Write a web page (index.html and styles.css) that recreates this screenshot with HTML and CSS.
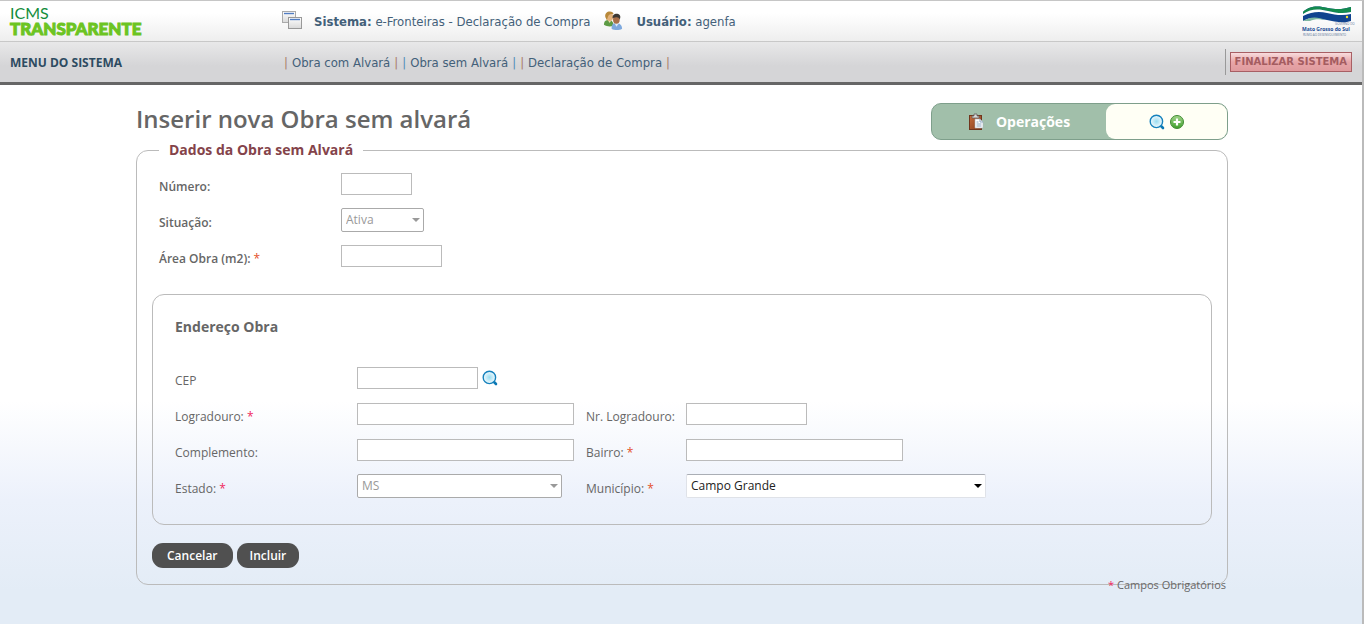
FILE: index.html
```
<!DOCTYPE html>
<html lang="pt-BR">
<head>
<meta charset="utf-8">
<meta name="viewport" content="width=device-width, initial-scale=1">
<title>ICMS Transparente</title>
<link rel="stylesheet" href="styles.css">
</head>
<body>
<svg class="defs" width="0" height="0" aria-hidden="true">
  <defs>
    <radialGradient id="lens"><stop offset="0" stop-color="#9adcf0"/><stop offset="1" stop-color="#f4fbfe"/></radialGradient>
    <linearGradient id="green" x2="0" y2="1"><stop offset="0" stop-color="#a4d68c"/><stop offset="1" stop-color="#3f9f2c"/></linearGradient>
    <linearGradient id="leather" x2="1" y2="1"><stop offset="0" stop-color="#c56c3c"/><stop offset="1" stop-color="#843c1b"/></linearGradient>
    <linearGradient id="pane" x2="0" y2="1"><stop offset="0" stop-color="#fff"/><stop offset="1" stop-color="#d9d9d9"/></linearGradient>
    <symbol id="search" viewBox="0 0 16 16">
      <path d="M11.500 11.500l2.500 2.500" stroke="#0b78b4" stroke-width="2.600" stroke-linecap="round"/>
      <circle cx="7.400" cy="7.400" r="6.200" fill="url(#lens)" stroke="#1682bd" stroke-width="1.400"/>
    </symbol>
  </defs>
</svg>
<div class="page">
  <header class="top">
    <div class="brand">
      <svg class="brand-logo" width="136" height="32" role="img" aria-label="ICMS Transparente">
        <text class="logo-thin" x="0" y="14">ICMS</text>
        <text class="logo-heavy" x="0" y="30">TRANSPARENTE</text>
      </svg>
    </div>
    <div class="info">
      <svg width="20" height="20" viewBox="0 0 20 20" aria-hidden="true">
        <rect x=".5" y=".5" width="13" height="11" fill="url(#pane)" stroke="#aaa"/>
        <path d="M2 2.500h10" stroke="#517dc3" stroke-width="1.400"/>
        <rect x="6.500" y="6.500" width="13" height="11" fill="url(#pane)" stroke="#999"/>
        <path d="M8 8.500h10" stroke="#517dc3" stroke-width="1.400"/>
      </svg>
      <p class="info-text"><strong>Sistema:</strong> e-Fronteiras - Declaração de Compra</p>
      <svg class="users" width="21" height="20" viewBox="0 0 22 20" aria-hidden="true">
        <path d="M1 14c0-4 2-5 5-5s5 2 5 6c-3 1-7 1-10-1z" fill="#5d9b44"/>
        <path d="M5 9l2 3 2-3z" fill="#e7d9b4"/>
        <ellipse cx="7" cy="5.500" rx="3.600" ry="4.500" fill="#e3b27b"/>
        <path d="M2.500 6c-1-4 2-6 4.500-6s4 1 4 3c-3-1-5 0-6 3l-1 3z" fill="#b8893a"/>
        <path d="M9 18c0-5 2-6 5-6s6 2 6 6c-3 2-8 2-11 0z" fill="#7ea9de"/>
        <path d="M12 12l2 4 3-4z" fill="#dce9f8"/>
        <ellipse cx="14" cy="8.500" rx="3.500" ry="4.500" fill="#a96f48"/>
        <path d="M10 7c0-4 3-5 5-4.500 3 .5 4 3 2.500 6-1-3-3-3-7.500-1.500z" fill="#3c3833"/>
      </svg>
      <p class="info-text"><strong>Usuário:</strong> agenfa</p>
    </div>
    <svg class="state-logo" width="50" height="32" viewBox="0 0 50 32" role="img" aria-label="Mato Grosso do Sul">
      <path d="M1 7C8 0 17 1 26 3s16 1 23-1v14c-9 3-17 0-24-1S9 11 1 16z" fill="#11438f"/>
      <path d="M1 7C8 0 17 1 26 3s16 1 23-1v5c-8 2-15 1-23-1S9 4 1 9z" fill="#138a4e"/>
      <path d="M1 9c8-6 17-5 25-3s15 3 23 1v2c-8 2-16 1-24-1S9 7 1 11z" fill="#fff"/>
      <path d="M1 16c8-5 15-4 23-1-6-1-12-1-16 1z" fill="#7fb7a2"/>
      <circle cx="45" cy="12" r="1.200" fill="#f5e02c"/>
      <text class="state-gov" x="33" y="20">GOVERNO DO</text>
      <text class="state-name" x="0" y="26">Mato Grosso do Sul</text>
      <text class="state-gov" x="1" y="31">RUMO AO DESENVOLVIMENTO</text>
    </svg>
  </header>

  <div class="menubar">
    <h2 class="menu-title">MENU DO SISTEMA</h2>
    <nav class="menu">
      <span>|</span><a href="#">Obra com Alvará</a><span>|</span>
      <span class="blue">|</span><a href="#">Obra sem Alvará</a><span class="blue">|</span>
      <span>|</span><a href="#">Declaração de Compra</a><span>|</span>
    </nav>
    <div class="finish"><button type="button" class="finish-button">FINALIZAR SISTEMA</button></div>
  </div>

  <main class="content">
    <div class="heading">
      <h1 class="title">Inserir nova Obra sem alvará</h1>
      <div class="ops">
        <div class="ops-label">
          <svg width="16" height="18" viewBox="0 0 16 18" aria-hidden="true">
            <rect x="1.500" y="2.500" width="12" height="14" fill="url(#leather)" stroke="#70351d"/>
            <path d="M4 3h2V1h3v2h2v2H4z" fill="#d9d9d9" stroke="#65615e" stroke-width=".8"/>
            <path d="M7 6h5l3 3v6H7z" fill="#fff" stroke="#a6b0ba" stroke-width=".6"/>
            <path d="M12 6v3h3M8.500 9h2M8.500 11h5M8.500 13h5" fill="none" stroke="#8ba5bf"/>
          </svg>
          <span>Operações</span>
        </div>
        <div class="ops-tools">
          <button type="button" class="icon-button" aria-label="Pesquisar"><svg width="16" height="16"><use href="#search"/></svg></button>
          <button type="button" class="icon-button" aria-label="Adicionar">
            <svg width="14" height="14" viewBox="0 0 14 14">
              <circle cx="7" cy="7" r="6.500" fill="url(#green)" stroke="#3f8a33"/>
              <path d="M7 3.500v7M3.500 7h7" stroke="#fff" stroke-width="2.200"/>
            </svg>
          </button>
        </div>
      </div>
    </div>

    <form>
      <fieldset class="panel">
        <legend class="legend">Dados da Obra sem Alvará</legend>
        <div class="fields fields-main">
          <label for="numero">Número:</label><div><input class="box w-xs" id="numero" type="text"></div>
          <label for="situacao">Situação:</label><div><span class="pick w-sm off"><select id="situacao" disabled><option>Ativa</option></select></span></div>
          <label for="area">Área Obra (m2): <span class="req">*</span></label><div><input class="box w-md" id="area" type="text"></div>
        </div>

        <section class="address">
          <h3 class="address-title">Endereço Obra</h3>
          <div class="fields fields-address">
            <label for="cep">CEP</label>
            <div class="wide cep"><input class="box w-lg" id="cep" type="text"><button type="button" class="icon-button" aria-label="Buscar CEP"><svg width="16" height="16"><use href="#search"/></svg></button></div>
            <label for="logradouro">Logradouro: <span class="req pink">*</span></label><div><input class="box w-xl" id="logradouro" type="text"></div>
            <label for="nr">Nr. Logradouro:</label><div><input class="box w-lg" id="nr" type="text"></div>
            <label for="complemento">Complemento:</label><div><input class="box w-xl" id="complemento" type="text"></div>
            <label for="bairro">Bairro: <span class="req">*</span></label><div><input class="box w-xl" id="bairro" type="text"></div>
            <label for="estado">Estado: <span class="req pink">*</span></label><div><span class="pick w-state off"><select id="estado" disabled><option>MS</option></select></span></div>
            <label for="municipio">Município: <span class="req">*</span></label><div><span class="pick w-city"><select id="municipio"><option>Campo Grande</option></select></span></div>
          </div>
        </section>

        <div class="actions">
          <button type="button" class="pill pill-wide">Cancelar</button>
          <button type="submit" class="pill">Incluir</button>
        </div>
      </fieldset>
      <p class="note"><span class="req pink">*</span> Campos Obrigatórios</p>
    </form>
  </main>
</div>
</body>
</html>
```
FILE: styles.css
```
* { box-sizing: border-box; }

body {
  margin: 0;
  color: #666;
  background: #fff;
  font: 12px/16px "Trebuchet MS", "Open Sans", sans-serif;
}

h1, h2, h3, p { margin: 0; }
svg { display: block; flex: none; }
.defs { position: absolute; }

.page {
  min-height: 100vh;
  margin-right: 2px;
  border-top: 1px solid #c6c6c6;
  border-right: 2px solid #bbb;
  background: linear-gradient(#fff 400px, #ecf1fb 500px, #e3ecf6 590px);
}

/* Header */
.top {
  display: flex;
  align-items: center;
  height: 41px;
  padding: 0 10px;
  border-bottom: 1px solid #c8c8c8;
  background: linear-gradient(#fff 30%, #eee);
}
.brand { width: 272px; }
.brand-logo { overflow: visible; }
.logo-thin { font: 400 16px "Lato", sans-serif; fill: #138d3c; }
.logo-heavy { font: 900 17px "Lato", sans-serif; fill: #6cc422; stroke: #6cc422; stroke-width: 1px; }
.info {
  display: flex;
  align-items: center;
  flex: 1;
  color: #436079;
  font: 13px/16px "DejaVu Sans Condensed", "DejaVu Sans", sans-serif;
}
.info-text { margin-left: 12px; padding-top: 2px; }
.users { margin-left: 13px; }
.state-logo { overflow: visible; }
.state-name { font: 700 5px "Open Sans", sans-serif; fill: #174a95; }
.state-gov { font: 3px "Open Sans", sans-serif; fill: #5d7599; }

.menubar {
  display: flex;
  align-items: center;
  height: 43px;
  padding: 0 10px;
  border-bottom: 3px solid #666;
  background: linear-gradient(#e8e8e9, #d5d5d7 60%);
}
.menu-title { width: 274px; padding-top: 2px; color: #2d4b61; font: 700 12px/16px "Open Sans", sans-serif; }
.menu {
  display: flex;
  flex: 1;
  gap: 4px;
  padding-top: 2px;
  font: 13px/16px "DejaVu Sans Condensed", "DejaVu Sans", sans-serif;
}
.menu span { color: #a97c68; }
.menu .blue { color: #4f8db9; }
.menu a { color: #436079; text-decoration: none; }
.finish { padding: 3px 0 3px 4px; border-left: 1px solid #999; }
.finish-button {
  height: 20px;
  padding: 0 4px;
  border: 1px solid #a85f64;
  background: linear-gradient(#f8dcdd, #e7a5a8 50%, #e09b9e);
  color: #a45c60;
  font: 700 10px/16px "DejaVu Sans", sans-serif;
}

/* Content */
.content { margin: 0 134px 0 136px; padding-top: 18px; }
.heading { display: flex; align-items: center; justify-content: space-between; height: 37px; }
.title { padding-bottom: 6px; font-size: 24px; line-height: 32px; font-weight: 600; }
.ops {
  display: flex;
  width: 297px;
  height: 37px;
  border: 1px solid #7e9f8b;
  border-radius: 10px;
  background: #a1bfaa;
}
.ops-label {
  display: flex;
  flex: 1;
  align-items: center;
  justify-content: center;
  gap: 12px;
  color: #fff;
  font-size: 14px;
  font-weight: 700;
}
.ops-tools {
  display: flex;
  align-items: center;
  justify-content: center;
  gap: 5px;
  width: 121px;
  border-radius: 9px;
  background: #fffff5;
}
.icon-button { padding: 0; border: 0; background: none; }

.panel {
  min-width: 0;
  margin: 0;
  padding: 6px 15px 16px;
  border: 1px solid #bbb;
  border-radius: 12px;
}
.legend {
  margin-left: 7px;
  padding: 0 10px;
  color: #84434a;
  font-size: 14px;
  line-height: 20px;
  font-weight: 700;
}
.fields { display: grid; grid-auto-rows: 36px; align-items: center; }
.fields label { padding-top: 5px; }
.fields-main { grid-template-columns: 182px 1fr; padding-left: 7px; }
.fields-main label { font-weight: 600; }
.fields-address { grid-template-columns: 182px 229px 100px 1fr; }
.wide { grid-column: span 3; }
.cep { display: flex; align-items: center; gap: 4px; }
.req { color: #e4502a; font-weight: 400; }
.pink { color: #f0285e; }

.box {
  display: block;
  height: 22px;
  padding: 0 4px;
  border: 1px solid #bbb;
  background: #fff;
  color: #333;
  font: inherit;
}
.w-xs { width: 71px; }
.w-sm { width: 83px; }
.w-md { width: 101px; }
.w-lg { width: 121px; }
.w-xl { width: 217px; }
.w-state { width: 205px; }
.w-city { width: 300px; }

.pick { position: relative; display: block; }
.pick select {
  display: block;
  width: 100%;
  height: 24px;
  padding: 0 4px;
  appearance: none;
  border: 1px solid #dfe2e8;
  border-top-color: #aaaeb5;
  border-radius: 2px;
  background: #fff;
  color: #222;
  font: inherit;
}
.pick::after {
  content: "";
  position: absolute;
  top: 10px;
  right: 4px;
  border: 4px solid transparent;
  border-top-color: #000;
  border-bottom: 0;
}
.pick.off select { border-color: #aaa; color: #999; opacity: 1; }
.pick.off::after { border-top-color: #999; }

.address {
  margin-top: 20px;
  padding: 22px 22px 20px;
  border: 1px solid #bbb;
  border-radius: 12px;
}
.address-title { margin-bottom: 23px; font-size: 14px; line-height: 20px; font-weight: 700; }

.actions { display: flex; gap: 4px; margin-top: 18px; }
.pill {
  height: 25px;
  padding: 0 13px;
  border: 0;
  border-radius: 11px;
  background: #505050;
  color: #fff;
  font: 600 12px/16px "Trebuchet MS", "Open Sans", sans-serif;
}
.pill-wide { padding: 0 15px; }
.note { margin-top: -8px; padding-right: 2px; font-size: 11px; text-align: right; }
```
